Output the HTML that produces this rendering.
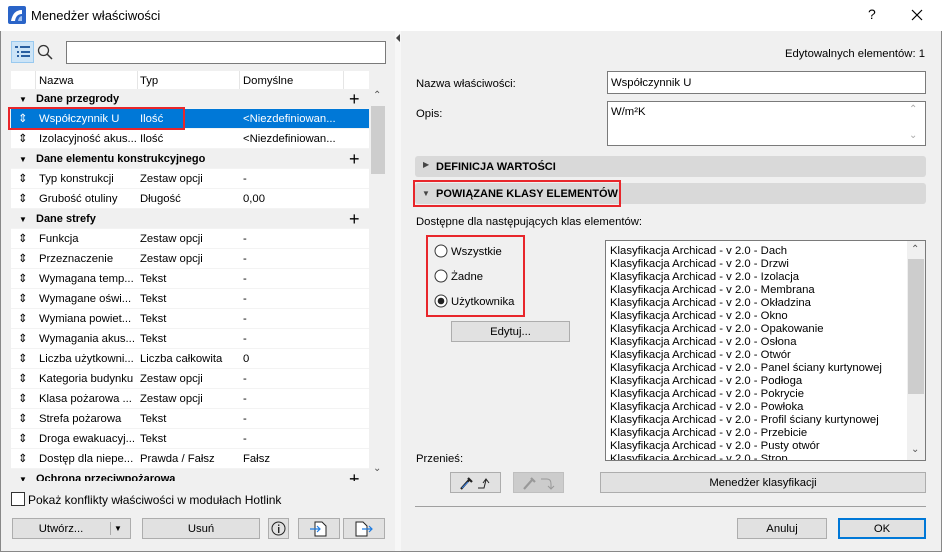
<!DOCTYPE html>
<html><head><meta charset="utf-8"><style>
*{box-sizing:border-box;margin:0;padding:0}
body{width:942px;height:552px;overflow:hidden;background:#f0f0f0;font-family:"Liberation Sans",sans-serif;font-size:11.3px;color:#000;position:relative}
.a{position:absolute}
.title{left:0;top:0;width:942px;height:31px;background:#fff}
.row{position:absolute;left:11px;width:358px;height:20px;line-height:21px;background:#fff;border-bottom:1px solid #f3f3f3}
.row span{position:absolute;white-space:nowrap}
.grp{background:#f0f0f0;font-weight:bold;font-size:11px}
.btn{position:absolute;background:#e1e1e1;border:1px solid #adadad;text-align:center;line-height:20px}
.li{position:absolute;left:4px;white-space:nowrap;line-height:13px;top:1px}
.t{position:absolute;margin-top:1px}
</style></head><body>
<div class="a title"></div>
<svg class="a" style="left:8px;top:6px" width="18" height="18"><rect width="18" height="18" rx="2" fill="#2a64c8"/><path d="M3 15 Q5 4 14 4 L14 8 Q8 8 7 15Z" fill="#fff"/><path d="M10 15 Q11 10 14 10 L14 15Z" fill="#9fc0f0"/></svg>
<div class="a" style="left:31px;top:8px;font-size:13px">Menedżer właściwości</div>
<div class="a" style="left:868px;top:6px;font-size:14px">?</div>
<svg class="a" style="left:911px;top:9px" width="12" height="12"><path d="M1 1L11 11M11 1L1 11" stroke="#000" stroke-width="1.2"/></svg>
<div class="a" style="left:0;top:31px;width:1px;height:521px;background:#888"></div>
<div class="a" style="left:941px;top:31px;width:1px;height:521px;background:#888"></div>
<div class="a" style="left:0;top:551px;width:942px;height:1px;background:#888"></div>
<div class="a" style="left:395px;top:31px;width:6px;height:520px;background:#f7f7f7"></div>
<svg class="a" style="left:396px;top:34px" width="5" height="8"><path d="M4 0L0 4L4 8Z" fill="#444"/></svg>
<div class="a" style="left:11px;top:41px;width:23px;height:22px;background:#cce4f7;border:1px solid #99c9ef"></div>
<svg class="a" style="left:15px;top:46px" width="16" height="12"><g fill="#2a5fa0"><rect x="0" y="0" width="3" height="2"/><rect x="5" y="0" width="10" height="2"/><rect x="2" y="5" width="2" height="2"/><rect x="6" y="5" width="9" height="2"/><rect x="2" y="9" width="2" height="2"/><rect x="6" y="9" width="9" height="2"/></g></svg>
<svg class="a" style="left:37px;top:44px" width="16" height="16"><circle cx="6.5" cy="6.5" r="5" fill="none" stroke="#333" stroke-width="1.3"/><path d="M10 10L15 15" stroke="#333" stroke-width="1.5"/></svg>
<div class="a" style="left:66px;top:41px;width:320px;height:23px;background:#fff;border:1px solid #7a7a7a"></div>
<div class="a" style="left:11px;top:71px;width:358px;height:18px;background:#fff"></div>
<div class="a" style="left:35px;top:71px;width:1px;height:18px;background:#e5e5e5"></div>
<div class="a" style="left:137px;top:71px;width:1px;height:18px;background:#e5e5e5"></div>
<div class="a" style="left:239px;top:71px;width:1px;height:18px;background:#e5e5e5"></div>
<div class="a" style="left:343px;top:71px;width:1px;height:18px;background:#e5e5e5"></div>
<div class="a" style="left:39px;top:75px">Nazwa</div>
<div class="a" style="left:140px;top:75px">Typ</div>
<div class="a" style="left:243px;top:75px">Domyślne</div>
<div class="a" style="left:369px;top:89px;width:16px;height:392px;background:#f0f0f0"></div>
<div class="a" style="left:371px;top:106px;width:14px;height:68px;background:#cdcdcd"></div>
<div class="a" style="left:373px;top:90px;font-size:10px;color:#555">&#8963;</div>
<div class="a" style="left:373px;top:463px;font-size:10px;color:#555">&#8964;</div>
<div class="a" style="left:11px;top:89px;width:358px;height:392px;overflow:hidden">
<div style="position:relative;left:-11px;top:-89px">
<div class="row grp" style="top:89px"><span style="left:8px;font-size:8px">▼</span><span style="left:25px">Dane przegrody</span><span style="left:338px;font-weight:normal;font-size:18px">+</span></div>
<div class="row" style="top:109px;background:#0078d7;color:#fff"><span style="left:7px">⇕</span><span style="left:28px">Współczynnik U</span><span style="left:129px">Ilość</span><span style="left:232px">&lt;Niezdefiniowan...</span></div>
<div class="row" style="top:129px"><span style="left:7px">⇕</span><span style="left:28px">Izolacyjność akus...</span><span style="left:129px">Ilość</span><span style="left:232px">&lt;Niezdefiniowan...</span></div>
<div class="row grp" style="top:149px"><span style="left:8px;font-size:8px">▼</span><span style="left:25px">Dane elementu konstrukcyjnego</span><span style="left:338px;font-weight:normal;font-size:18px">+</span></div>
<div class="row" style="top:169px"><span style="left:7px">⇕</span><span style="left:28px">Typ konstrukcji</span><span style="left:129px">Zestaw opcji</span><span style="left:232px">-</span></div>
<div class="row" style="top:189px"><span style="left:7px">⇕</span><span style="left:28px">Grubość otuliny</span><span style="left:129px">Długość</span><span style="left:232px">0,00</span></div>
<div class="row grp" style="top:209px"><span style="left:8px;font-size:8px">▼</span><span style="left:25px">Dane strefy</span><span style="left:338px;font-weight:normal;font-size:18px">+</span></div>
<div class="row" style="top:229px"><span style="left:7px">⇕</span><span style="left:28px">Funkcja</span><span style="left:129px">Zestaw opcji</span><span style="left:232px">-</span></div>
<div class="row" style="top:249px"><span style="left:7px">⇕</span><span style="left:28px">Przeznaczenie</span><span style="left:129px">Zestaw opcji</span><span style="left:232px">-</span></div>
<div class="row" style="top:269px"><span style="left:7px">⇕</span><span style="left:28px">Wymagana temp...</span><span style="left:129px">Tekst</span><span style="left:232px">-</span></div>
<div class="row" style="top:289px"><span style="left:7px">⇕</span><span style="left:28px">Wymagane oświ...</span><span style="left:129px">Tekst</span><span style="left:232px">-</span></div>
<div class="row" style="top:309px"><span style="left:7px">⇕</span><span style="left:28px">Wymiana powiet...</span><span style="left:129px">Tekst</span><span style="left:232px">-</span></div>
<div class="row" style="top:329px"><span style="left:7px">⇕</span><span style="left:28px">Wymagania akus...</span><span style="left:129px">Tekst</span><span style="left:232px">-</span></div>
<div class="row" style="top:349px"><span style="left:7px">⇕</span><span style="left:28px">Liczba użytkowni...</span><span style="left:129px">Liczba całkowita</span><span style="left:232px">0</span></div>
<div class="row" style="top:369px"><span style="left:7px">⇕</span><span style="left:28px">Kategoria budynku</span><span style="left:129px">Zestaw opcji</span><span style="left:232px">-</span></div>
<div class="row" style="top:389px"><span style="left:7px">⇕</span><span style="left:28px">Klasa pożarowa ...</span><span style="left:129px">Zestaw opcji</span><span style="left:232px">-</span></div>
<div class="row" style="top:409px"><span style="left:7px">⇕</span><span style="left:28px">Strefa pożarowa</span><span style="left:129px">Tekst</span><span style="left:232px">-</span></div>
<div class="row" style="top:429px"><span style="left:7px">⇕</span><span style="left:28px">Droga ewakuacyj...</span><span style="left:129px">Tekst</span><span style="left:232px">-</span></div>
<div class="row" style="top:449px"><span style="left:7px">⇕</span><span style="left:28px">Dostęp dla niepe...</span><span style="left:129px">Prawda / Fałsz</span><span style="left:232px">Fałsz</span></div>
<div class="row grp" style="top:469px"><span style="left:8px;font-size:8px">▼</span><span style="left:25px">Ochrona przeciwpożarowa</span><span style="left:338px;font-weight:normal;font-size:18px">+</span></div>
</div></div>
<div class="a" style="left:8px;top:107px;width:177px;height:23px;border:2px solid #e8262b"></div>
<div class="a" style="left:11px;top:492px;width:14px;height:14px;background:#fff;border:1px solid #333"></div>
<div class="a" style="left:28px;top:493px;font-size:12px">Pokaż konflikty właściwości w modułach Hotlink</div>
<div class="btn" style="left:12px;top:518px;width:119px;height:21px"><span style="position:absolute;left:0;width:96px">Utwórz...</span><span style="position:absolute;left:97px;top:3px;width:1px;height:13px;background:#aaa"></span><span style="position:absolute;left:101px;font-size:8px">▼</span></div>
<div class="btn" style="left:142px;top:518px;width:118px;height:21px">Usuń</div>
<div class="btn" style="left:268px;top:518px;width:21px;height:21px"><svg style="margin-top:2px" width="15" height="15"><circle cx="7.5" cy="7.5" r="6.5" fill="none" stroke="#222"/><rect x="7" y="6" width="1.4" height="6" fill="#222"/><rect x="7" y="3.5" width="1.4" height="1.4" fill="#222"/></svg></div>
<div class="btn" style="left:298px;top:518px;width:42px;height:21px"><svg style="margin-top:2px" width="20" height="16"><path d="M6 1H13L17 5V15H6Z" fill="#fff" stroke="#222"/><path d="M1 8H11M8 5L11 8L8 11" fill="none" stroke="#1e7be0" stroke-width="1.2"/></svg></div>
<div class="btn" style="left:343px;top:518px;width:42px;height:21px"><svg style="margin-top:2px" width="20" height="16"><path d="M2 1H9L13 5V15H2Z" fill="#fff" stroke="#222"/><path d="M8 8H18M15 5L18 8L15 11" fill="none" stroke="#1e7be0" stroke-width="1.2"/></svg></div>
<div class="a" style="right:17px;top:48px">Edytowalnych elementów: 1</div>
<div class="a" style="left:416px;top:78px">Nazwa właściwości:</div>
<div class="a" style="left:607px;top:71px;width:319px;height:23px;background:#fff;border:1px solid #7a7a7a;padding:5px 3px">Współczynnik U</div>
<div class="a" style="left:416px;top:108px">Opis:</div>
<div class="a" style="left:607px;top:101px;width:319px;height:45px;background:#fff;border:1px solid #7a7a7a;padding:4px 3px">W/m²K</div>
<div class="a" style="left:909px;top:104px;font-size:10px;color:#aaa">&#8963;</div>
<div class="a" style="left:909px;top:130px;font-size:10px;color:#aaa">&#8964;</div>
<div class="a" style="left:415px;top:156px;width:511px;height:21px;background:#d9d9d9;border-radius:3px;font-weight:bold;font-size:11px;line-height:22px;padding-left:21px">DEFINICJA WARTOŚCI</div>
<div class="a" style="left:423px;top:160px;font-size:8px;color:#444">▶</div>
<div class="a" style="left:415px;top:183px;width:511px;height:21px;background:#d9d9d9;border-radius:3px;font-weight:bold;font-size:11px;line-height:22px;padding-left:21px">POWIĄZANE KLASY ELEMENTÓW</div>
<div class="a" style="left:422px;top:189px;font-size:8px;color:#444">▼</div>
<div class="a" style="left:413px;top:180px;width:208px;height:27px;border:2px solid #e8262b"></div>
<div class="a" style="left:416px;top:216px">Dostępne dla następujących klas elementów:</div>
<div class="a" style="left:426px;top:235px;width:99px;height:82px;border:2px solid #e8262b"></div>
<svg class="a" style="left:434px;top:244px" width="14" height="65"><circle cx="7" cy="7" r="6" fill="#fff" stroke="#333"/><circle cx="7" cy="32" r="6" fill="#fff" stroke="#333"/><circle cx="7" cy="57" r="6" fill="#fff" stroke="#333"/><circle cx="7" cy="57" r="3.3" fill="#222"/></svg>
<div class="a" style="left:451px;top:246px">Wszystkie</div>
<div class="a" style="left:451px;top:271px">Żadne</div>
<div class="a" style="left:451px;top:296px">Użytkownika</div>
<div class="btn" style="left:451px;top:321px;width:119px;height:21px">Edytuj...</div>
<div class="a" style="left:605px;top:240px;width:321px;height:221px;background:#fff;border:1px solid #7a7a7a;overflow:hidden">
<div style="position:absolute;left:301px;top:0;width:18px;height:220px;background:#f0f0f0"></div>
<div style="position:absolute;left:302px;top:18px;width:16px;height:135px;background:#cdcdcd"></div>
<div style="position:absolute;left:305px;top:3px;font-size:10px;color:#555">&#8963;</div>
<div style="position:absolute;left:305px;top:203px;font-size:10px;color:#555">&#8964;</div>
<div class="li" style="top:4px">Klasyfikacja Archicad - v 2.0 - Dach</div>
<div class="li" style="top:17px">Klasyfikacja Archicad - v 2.0 - Drzwi</div>
<div class="li" style="top:30px">Klasyfikacja Archicad - v 2.0 - Izolacja</div>
<div class="li" style="top:43px">Klasyfikacja Archicad - v 2.0 - Membrana</div>
<div class="li" style="top:56px">Klasyfikacja Archicad - v 2.0 - Okładzina</div>
<div class="li" style="top:69px">Klasyfikacja Archicad - v 2.0 - Okno</div>
<div class="li" style="top:82px">Klasyfikacja Archicad - v 2.0 - Opakowanie</div>
<div class="li" style="top:95px">Klasyfikacja Archicad - v 2.0 - Osłona</div>
<div class="li" style="top:108px">Klasyfikacja Archicad - v 2.0 - Otwór</div>
<div class="li" style="top:121px">Klasyfikacja Archicad - v 2.0 - Panel ściany kurtynowej</div>
<div class="li" style="top:134px">Klasyfikacja Archicad - v 2.0 - Podłoga</div>
<div class="li" style="top:147px">Klasyfikacja Archicad - v 2.0 - Pokrycie</div>
<div class="li" style="top:160px">Klasyfikacja Archicad - v 2.0 - Powłoka</div>
<div class="li" style="top:173px">Klasyfikacja Archicad - v 2.0 - Profil ściany kurtynowej</div>
<div class="li" style="top:186px">Klasyfikacja Archicad - v 2.0 - Przebicie</div>
<div class="li" style="top:199px">Klasyfikacja Archicad - v 2.0 - Pusty otwór</div>
<div class="li" style="top:212px">Klasyfikacja Archicad - v 2.0 - Strop</div>
</div>
<div class="a" style="left:416px;top:453px">Przenieś:</div>
<div class="btn" style="left:450px;top:472px;width:51px;height:21px"><svg style="margin-top:2px" width="36" height="16"><path d="M3 14L11 5M10 3L14 7" stroke="#222" stroke-width="2.2"/><path d="M4 13L10 7" stroke="#3a7bd5" stroke-width="1.2"/><path d="M20 13H26L28 5M25 8L28 4L31 8" fill="none" stroke="#222"/></svg></div>
<div class="btn" style="left:513px;top:472px;width:51px;height:21px;background:#ccc;border-color:#bfbfbf"><svg style="margin-top:2px" width="36" height="16"><path d="M3 14L11 5M10 3L14 7" stroke="#999" stroke-width="2.2"/><path d="M20 4H26Q30 4 30 9V14M27 11L30 14L33 11" fill="none" stroke="#999"/></svg></div>
<div class="btn" style="left:600px;top:472px;width:326px;height:21px">Menedżer klasyfikacji</div>
<div class="a" style="left:415px;top:506px;width:511px;height:1px;background:#a0a0a0"></div>
<div class="btn" style="left:737px;top:518px;width:90px;height:21px">Anuluj</div>
<div class="btn" style="left:838px;top:518px;width:88px;height:21px;border:2px solid #0078d7;line-height:18px">OK</div>
</body></html>
